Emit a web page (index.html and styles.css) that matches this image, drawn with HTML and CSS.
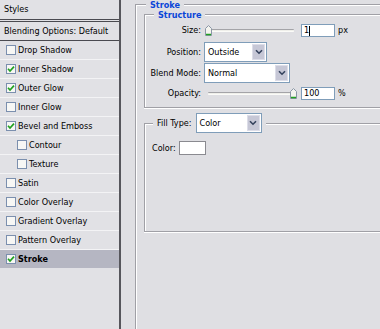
FILE: index.html
```html
<!DOCTYPE html>
<html>
<head>
<meta charset="utf-8">
<link rel="stylesheet" href="styles.css">
</head>
<body>
<div class="app">
  <aside class="styles-panel">
    <div class="panel-head">Styles</div>
    <div class="panel-blend">Blending Options: Default</div>
    <ul class="style-list">
      <li class="style-item"><span class="cb"></span>Drop Shadow</li>
      <li class="style-item"><span class="cb"><svg viewBox="0 0 10 10" width="10" height="10"><path d="M2 4.8 L4 7 L8 2.6" fill="none" stroke="#21a121" stroke-width="1.7"/></svg></span>Inner Shadow</li>
      <li class="style-item"><span class="cb"><svg viewBox="0 0 10 10" width="10" height="10"><path d="M2 4.8 L4 7 L8 2.6" fill="none" stroke="#21a121" stroke-width="1.7"/></svg></span>Outer Glow</li>
      <li class="style-item"><span class="cb"></span>Inner Glow</li>
      <li class="style-item"><span class="cb"><svg viewBox="0 0 10 10" width="10" height="10"><path d="M2 4.8 L4 7 L8 2.6" fill="none" stroke="#21a121" stroke-width="1.7"/></svg></span>Bevel and Emboss</li>
      <li class="style-item sub"><span class="cb"></span>Contour</li>
      <li class="style-item sub"><span class="cb"></span>Texture</li>
      <li class="style-item"><span class="cb"></span>Satin</li>
      <li class="style-item"><span class="cb"></span>Color Overlay</li>
      <li class="style-item"><span class="cb"></span>Gradient Overlay</li>
      <li class="style-item"><span class="cb"></span>Pattern Overlay</li>
      <li class="style-item selected"><span class="cb"><svg viewBox="0 0 10 10" width="10" height="10"><path d="M2 4.8 L4 7 L8 2.6" fill="none" stroke="#21a121" stroke-width="1.7"/></svg></span>Stroke</li>
    </ul>
  </aside>
  <main class="settings">
    <section class="group group-outer">
      <div class="group-title">Stroke</div>
      <section class="group group-structure">
        <div class="group-title title-sub">Structure</div>
        <div class="row row-size">
          <span class="label">Size:</span>
          <div class="slider">
            <div class="track"></div>
            <svg class="thumb" style="left:1px" viewBox="0 0 7 11" width="7" height="11"><path d="M0.5 3.5 L3.5 0.5 L6.5 3.5 V10.5 H0.5 Z" fill="#f4f4ef" stroke="#8a96a6"/><path d="M1 9.5 H6" stroke="#21a121" stroke-width="1.5"/></svg>
          </div>
          <div class="num"><span>1</span><i class="caret"></i></div>
          <span class="unit">px</span>
        </div>
        <div class="row row-pos">
          <span class="label">Position:</span>
          <div class="select sel-pos"><span class="sel-text">Outside</span><span class="sel-btn"><svg viewBox="0 0 8 6" width="8" height="6"><path d="M1 1.2 L4 4.2 L7 1.2" fill="none" stroke="#33415c" stroke-width="1.6"/></svg></span></div>
        </div>
        <div class="row row-blend">
          <span class="label">Blend Mode:</span>
          <div class="select sel-blend"><span class="sel-text">Normal</span><span class="sel-btn"><svg viewBox="0 0 8 6" width="8" height="6"><path d="M1 1.2 L4 4.2 L7 1.2" fill="none" stroke="#33415c" stroke-width="1.6"/></svg></span></div>
        </div>
        <div class="row row-opacity">
          <span class="label">Opacity:</span>
          <div class="slider">
            <div class="track track-op"></div>
            <svg class="thumb" style="left:86px" viewBox="0 0 7 11" width="7" height="11"><path d="M0.5 3.5 L3.5 0.5 L6.5 3.5 V10.5 H0.5 Z" fill="#f4f4ef" stroke="#8a96a6"/><path d="M1 9.5 H6" stroke="#21a121" stroke-width="1.5"/></svg>
          </div>
          <div class="num"><span>100</span></div>
          <span class="unit">%</span>
        </div>
      </section>
      <section class="group group-fill">
        <div class="fill-legend">
          <span class="fill-label">Fill Type:</span>
          <div class="select sel-fill"><span class="sel-text">Color</span><span class="sel-btn"><svg viewBox="0 0 8 6" width="8" height="6"><path d="M1 1.2 L4 4.2 L7 1.2" fill="none" stroke="#33415c" stroke-width="1.6"/></svg></span></div>
        </div>
        <div class="color-row">
          <span class="color-label">Color:</span>
          <span class="swatch"></span>
        </div>
      </section>
    </section>
  </main>
</div>
</body>
</html>
```
FILE: styles.css
```css
html, body {
  margin: 0;
  padding: 0;
  width: 380px;
  height: 329px;
  overflow: hidden;
  background: #dfdfe3;
}
body {
  font-family: "DejaVu Sans Condensed", "DejaVu Sans", sans-serif;
  font-stretch: condensed;
  font-size: 9px;
  color: #000;
}
.app {
  display: flex;
  height: 329px;
}
.styles-panel {
  width: 119px;
  flex: none;
  border-right: 2px solid #56565c;
  background: #e1e1e5;
  height: 329px;
}
.panel-head {
  height: 19px;
  line-height: 19px;
  padding-left: 4px;
  border-bottom: 3px double #4a4a50;
}
.panel-blend {
  height: 18px;
  line-height: 18px;
  padding-left: 4px;
  border-bottom: 1px solid #4a4a50;
}
.style-list {
  list-style: none;
  margin: 0;
  padding: 0;
}
.style-item {
  height: 18px;
  display: flex;
  align-items: center;
  padding-left: 6px;
  border-bottom: 1px solid #f3f3f5;
}
.style-item.sub {
  padding-left: 17px;
}
.style-item.selected {
  background: #b5b6c2;
  font-weight: bold;
  border-bottom: none;
}
.cb {
  width: 8px;
  height: 8px;
  border: 1px solid #7b8fae;
  background: #f7f7f5;
  margin-right: 2px;
  display: flex;
  flex: none;
}
.cb svg {
  margin: -1px;
}
.settings {
  flex: 1;
  padding-left: 14px;
}
.group {
  border-top: 1px solid #a0a0a6;
  border-left: 1px solid #a0a0a6;
  box-shadow: inset 1px 1px 0 #fff;
}
.group-outer {
  margin-top: 4px;
  width: 400px;
  height: 400px;
}
.group-title {
  width: fit-content;
  margin-top: -5px;
  margin-left: 10px;
  padding: 0 4px;
  background: #dfdfe3;
  color: #0a46d8;
  font-weight: bold;
  line-height: 11px;
}
.group-structure,
.group-fill {
  margin-left: 8px;
  width: 300px;
  border-bottom: 1px solid #a0a0a6;
  box-shadow: inset 1px 1px 0 #fff, 0 1px 0 #fff;
}
.group-structure {
  margin-top: 3px;
  padding-bottom: 7px;
}
.title-sub {
  margin-top: -5px;
  margin-left: 9px;
}
.row {
  display: flex;
  align-items: center;
}
.label {
  width: 56px;
  text-align: right;
  flex: none;
  padding-bottom: 1px;
}
.row-size {
  margin-top: 3px;
  height: 13px;
}
.row-pos {
  margin-top: 5px;
  height: 20px;
}
.row-blend {
  margin-top: 1px;
  height: 20px;
}
.row-opacity {
  margin-top: 4px;
  height: 13px;
}
.slider {
  position: relative;
  width: 93px;
  height: 13px;
  margin-left: 3px;
}
.track {
  margin-top: 5px;
  margin-left: 4px;
  width: 86px;
  height: 1px;
  border-top: 1px solid #a4a4a8;
  border-bottom: 1px solid #fbfbf8;
  background: #efefea;
  border-radius: 1px;
}
.thumb {
  position: absolute;
  top: 1px;
}
.num {
  width: 30px;
  height: 11px;
  border: 1px solid #7f9db9;
  background: #fff;
  margin-left: 4px;
  display: flex;
  align-items: center;
  padding-left: 2px;
  box-sizing: content-box;
}
.num span {
  line-height: 11px;
}
.caret {
  width: 1px;
  height: 10px;
  background: #000;
  margin-left: 0;
}
.unit {
  margin-left: 3px;
  padding-bottom: 2px;
}
.select {
  height: 18px;
  border: 1px solid #7f9db9;
  background: #fff;
  margin-left: 3px;
  display: flex;
  align-items: center;
}
.sel-pos {
  width: 61px;
}
.sel-blend {
  width: 84px;
}
.sel-text {
  flex: 1;
  padding-left: 3px;
}
.sel-btn {
  width: 13px;
  height: 16px;
  margin-right: 1px;
  background: #c6c7d6;
  border: 1px solid #dcdde8;
  box-sizing: border-box;
  display: flex;
  align-items: center;
  justify-content: center;
}
.group-fill {
  margin-top: 15px;
  padding-bottom: 76px;
}
.fill-legend {
  display: flex;
  align-items: center;
  width: fit-content;
  margin-top: -11px;
  margin-left: 8px;
  padding: 0 4px;
  background: #dfdfe3;
}
.fill-label {
  padding-bottom: 1px;
}
.sel-fill {
  width: 64px;
  margin-left: 4px;
}
.color-row {
  display: flex;
  align-items: center;
  margin-top: 8px;
  padding-left: 7px;
}
.color-label {
  padding-bottom: 1px;
}
.swatch {
  width: 25px;
  height: 12px;
  border: 1px solid #8a8a90;
  background: #fff;
  margin-left: 3px;
}
```
